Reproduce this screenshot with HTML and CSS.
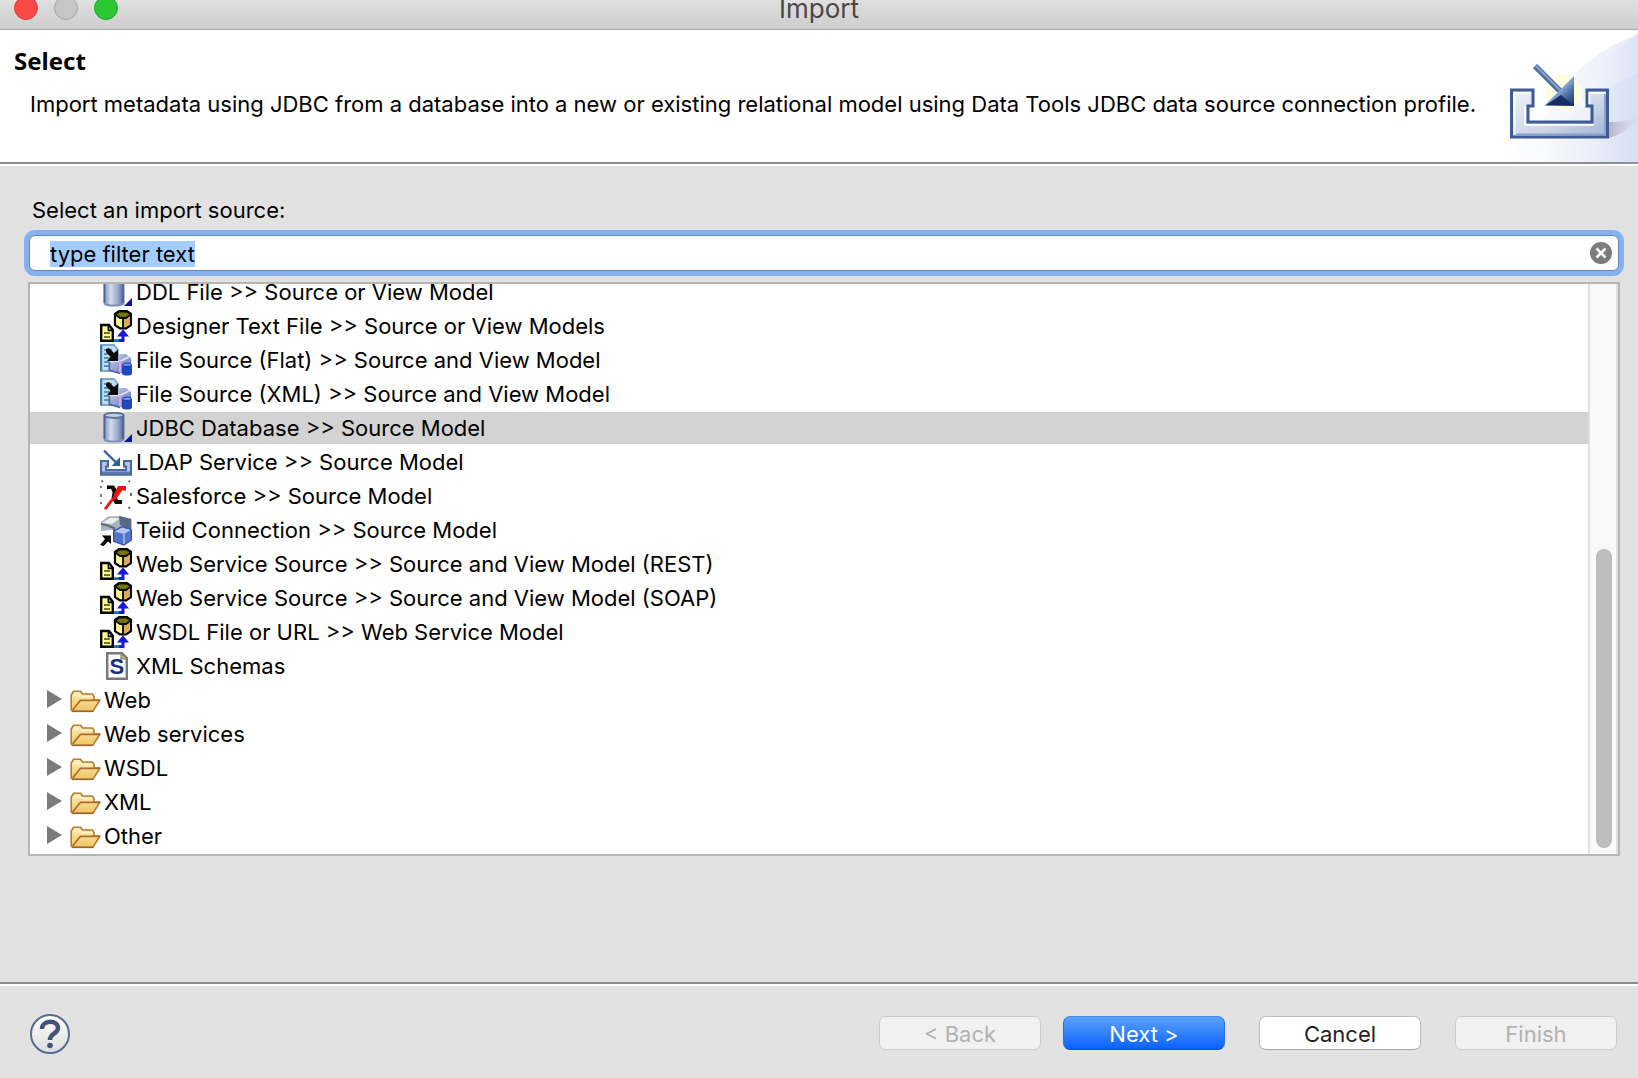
FILE: index.html
```html
<!DOCTYPE html>
<html lang="en">
<head>
<meta charset="utf-8">
<title>Import</title>
<link rel="stylesheet" href="styles.css">
</head>
<body>
<svg class="sprite" aria-hidden="true">
  <defs>
    <linearGradient id="cyl" x1="0" x2="1" y1="0" y2="0">
      <stop offset="0" stop-color="#8094bd"/><stop offset=".35" stop-color="#d3dcec"/><stop offset=".7" stop-color="#98a8cb"/><stop offset="1" stop-color="#4c6193"/>
    </linearGradient>
    <linearGradient id="gold" x1="0" x2="0" y1="0" y2="1">
      <stop offset="0" stop-color="#fdeebb"/><stop offset="1" stop-color="#f0c464"/>
    </linearGradient>
    <linearGradient id="cube" x1="0" x2="1" y1="0" y2="1">
      <stop offset="0" stop-color="#cfd5ee"/><stop offset="1" stop-color="#5a6cb8"/>
    </linearGradient>
    <symbol id="i-database" viewBox="0 0 16 16">
      <path d="M2 1.7V13.6C3.5 15.2 10.5 15.2 12 13.6V1.7Z" fill="url(#cyl)"/>
      <ellipse cx="7" cy="1.7" rx="4.8" ry="1.3" fill="#c5cde0" stroke="#5f739f" stroke-width=".9"/>
      <path d="M2.200 1.700V13.500M11.700 1.700V13.600" fill="none" stroke="#506596" stroke-width="1"/>
      <path d="M2 13.600C3.500 15.200 10.500 15.200 12 13.600" fill="none" stroke="#8290b5" stroke-width="1"/>
      <path d="M16 11V15H12Z" fill="#0c12a8"/>
    </symbol>
    <symbol id="i-model" viewBox="0 0 16 16">
      <path d="M7.500 2L9.500 .6H13.500L15.500 2V7.500L13 9.200H10L7.500 7.600Z" fill="#ffff90" stroke="#000" stroke-width="1.100"/>
      <path d="M11.700 4.400L15 3V7.200L11.700 8.900Z" fill="#d9aa55"/>
      <path d="M7.500 2.200L9.700 .8H13.300L15.500 2.200L13 4H10Z" fill="#777400" stroke="#0c0c00" stroke-width=".9"/>
      <path d="M11.500 4V9" stroke="#000" stroke-width=".9"/>
      <path d="M.6 7.500H4.500L6.400 10V15.400H.6Z" fill="#ffff95" stroke="#000" stroke-width="1.200"/>
      <path d="M4.200 7.500V10.200H6.500" fill="none" stroke="#000" stroke-width=".8"/>
      <path d="M2 11.500H5M2 13.500H5" stroke="#77752c" stroke-width="1"/>
      <path d="M7 15.300H10.500" stroke="#087aa8" stroke-width="1.400"/>
      <path d="M9.500 15.200H11.500V12" fill="none" stroke="#1418d8" stroke-width="1.500"/>
      <path d="M11.500 9.600L14.500 13.200H8.500Z" fill="#1418d8"/>
    </symbol>
    <symbol id="i-file" viewBox="0 0 16 16">
      <path d="M.5 .5H7L9 3V13.5H.5Z" fill="#c2ddec" stroke="#7fa9c8" stroke-width=".9"/>
      <path d="M.5 .5V13.5" stroke="#3f7ca8" stroke-width="1.2"/>
      <path d="M2 3H6M2 5H5M2 7H5M2 9H4.5M2 11H4.5" stroke="#5b93b8" stroke-width=".9"/>
      <path d="M4.500 9L8 5H13L15.500 7V12L12.500 15L4.500 13.300Z" fill="url(#cube)"/>
      <path d="M5 8.800L10.300 8.500L14.500 6.500" fill="none" stroke="#e4e0f6" stroke-width=".8"/>
      <path d="M10 8.500V14.200" stroke="#d9a6e4" stroke-width="1"/>
      <path d="M4.700 9V13.200L10 14.700" fill="none" stroke="#5066a8" stroke-width=".9"/>
      <path d="M11 10.500V15C12 16 15 16 16 15V10.500Z" fill="#1e48bd"/>
      <ellipse cx="13.500" cy="10.400" rx="2.300" ry=".9" fill="#6d94ee" stroke="#17389e" stroke-width=".5"/>
      <path d="M3 2.500L4.500 2L7 4.500L9 2.800V8.500H3.500L5.300 6.500L3 4Z" fill="#0b0b0b"/>
    </symbol>
    <symbol id="i-tray" viewBox="0 0 16 16">
      <path d="M.5 7.500H4V10.200H3V12H13V10.200H12V7.500H15.500V14.400H.5Z" fill="#b5c4e2" stroke="#4a679e"/>
      <path d="M1 13.500H15" stroke="#5b7ab0" stroke-width="1.500"/>
      <path d="M2 2.300L8 8.200" stroke="#3d5f9e" stroke-width="1.100"/>
      <path d="M10 5.500V10H5.800Z" fill="#27609c"/>
    </symbol>
    <symbol id="i-xlink" viewBox="0 0 16 16">
      <path d="M.7 .8L1.5 .4M14.300 .4L15 1M.4 3V4M.4 7V8.500M.4 11V12M15.500 6.500V8M14.200 13.500L15 14.300" stroke="#66706c" stroke-width="1"/>
      <path d="M3.500 2.800H7L8.500 5L8 8L9 10H11V12H7.500L5.800 9L6.300 6L5.500 4.500H3.500Z" fill="#0b0b0b"/>
      <path d="M1.800 14.500L5 10L6.500 8.500L7.500 6L9 3H13V5.300H11L8.500 9L6.500 10.500L3.300 14.800Z" fill="#f01414"/>
    </symbol>
    <symbol id="i-teiid" viewBox="0 0 16 16">
      <path d="M.5 4L4 1.300L10 1L15.500 2.500V9L9 8.500L5 8L.5 8.500Z" fill="#a9b3bf"/>
      <path d="M1 4.500L5 2L10 2.200L6 5Z" fill="#eceff2"/>
      <path d="M9.500 1L15.700 2.500V8L10 5.500Z" fill="#566a86"/>
      <path d="M.5 5L3 5.500L7 7V9" fill="none" stroke="#5f6c78" stroke-width="1"/>
      <path d="M6.800 8.500L11 6.300L15.700 7.800V13L12 15.500L6.800 13.700Z" fill="#5274cc" stroke="#3150a8" stroke-width=".6"/>
      <path d="M7.300 8.700L12 10L15.400 8L11 6.700Z" fill="#b5c8f2"/>
      <path d="M12 10V15" stroke="#a9c0f4" stroke-width=".7"/>
      <path d="M0 15.500L2.500 12.500L1 10.700H5.500V15L4 13.700L1.800 16Z" fill="#050505"/>
    </symbol>
    <symbol id="i-schema" viewBox="0 0 16 16">
      <path d="M3.600 1.600H11L13.400 4V14.400H3.600Z" fill="#fbfcff" stroke="#777" stroke-width="1.200"/>
      <path d="M10.500 1.500V4.500H13.500Z" fill="#c9ad72" stroke="#86806f" stroke-width=".6"/>
      <text x="8.400" y="12" text-anchor="middle" class="schema-letter">S</text>
    </symbol>
    <symbol id="i-folder" viewBox="0 0 16 16">
      <path d="M.6 13V5.500L1.800 3.600H5.300L6.200 5H11.200L12 6.200V8H15L11.500 13.600H1.200Z" fill="url(#gold)" stroke="#b87b33" stroke-width=".8" stroke-linejoin="round"/>
      <path d="M1.300 13L5.200 8.200H14.800" fill="none" stroke="#aa6d2c" stroke-width=".8"/>
      <path d="M2 5.500H5.600L6.400 6.300H11" fill="none" stroke="#fff4cf" stroke-width=".7"/>
      <path d="M1 13.700H11.600" stroke="#9c6228" stroke-width=".7"/>
    </symbol>
  </defs>
</svg>

<main class="dialog">
  <div class="titlebar">
    <div class="lights">
      <button class="light close" aria-label="Close"></button>
      <button class="light minimize" aria-label="Minimize" disabled></button>
      <button class="light expand" aria-label="Zoom"></button>
    </div>
    <span class="title">Import</span>
  </div>

  <header class="banner">
    <div class="banner-text">
      <h1>Select</h1>
      <p>Import metadata using JDBC from a database into a new or existing relational model using Data Tools JDBC data source connection profile.</p>
    </div>
    <svg class="banner-art" viewBox="0 0 138 132" aria-hidden="true">
      <defs>
        <linearGradient id="sky" x1="0" x2="1" y1="0" y2="0">
          <stop offset="0" stop-color="#fff"/><stop offset="1" stop-color="#d5ddf2"/>
        </linearGradient>
        <linearGradient id="steel" x1="0" x2="1" y1="0" y2="1">
          <stop offset="0" stop-color="#eef1f8"/><stop offset=".6" stop-color="#ccd6e8"/><stop offset="1" stop-color="#9fb0d4"/>
        </linearGradient>
        <linearGradient id="tip" x1="0" x2="1" y1="0" y2="1">
          <stop offset=".4" stop-color="#a9c8e4"/><stop offset=".7" stop-color="#4a6da4"/><stop offset="1" stop-color="#1b2f68"/>
        </linearGradient>
        <linearGradient id="shade" x1="0" x2="1" y1="0" y2="0">
          <stop offset="0" stop-color="#b8b2c6"/><stop offset="1" stop-color="#d5d5ea" stop-opacity=".2"/>
        </linearGradient>
      </defs>
      <path d="M138 4C95 20 60 52 52 80L0 132H138Z" fill="url(#sky)" opacity=".55"/>
      <path d="M138 4C108 22 88 50 76 90V132H138Z" fill="url(#sky)" opacity=".6"/>
      <path d="M138 44C105 55 60 90 30 132H138Z" fill="url(#sky)" opacity=".7"/>
      <path d="M109 92C118 92 130 90 138 87C132 98 122 104 109 108Z" fill="url(#shade)"/>
      <circle cx="64" cy="62" r="18" fill="#fffde0"/>
      <path d="M11.500 60H33V76H28V92H92V76H87V60H107.500V107H11.500Z" fill="url(#steel)" stroke="#3d5c96" stroke-width="3"/>
      <path d="M14.500 104V63H30M89.500 74V63H105M25 77V95H94" fill="none" stroke="#fff" stroke-width="2" opacity=".8"/>
      <path d="M16 104.500H105V64" fill="none" stroke="#8da1cb" stroke-width="2"/>
      <path d="M35 36L60 61" stroke="#4d6ea5" stroke-width="6"/>
      <path d="M36 36L60 60" stroke="#8ba4cb" stroke-width="2"/>
      <path d="M74 46V76H44Z" fill="url(#tip)"/>
      <path d="M46 75L61 65L73 75Z" fill="#192d63"/>
    </svg>
  </header>

  <section class="content">
    <label for="filter">Select an import source:</label>
    <div class="search">
      <input id="filter" type="text" value="type filter text" autocomplete="off" spellcheck="false">
      <button class="clear" aria-label="Clear">
        <svg viewBox="0 0 22 22"><circle cx="11" cy="11" r="11" fill="#7b7b7b"/><path d="M6.500 6.500L15.500 15.500M15.500 6.500L6.500 15.500" stroke="#fff" stroke-width="2.600"/></svg>
      </button>
    </div>
    <div class="tree-frame">
      <ul class="tree">
        <li class="leaf"><svg><use href="#i-database"/></svg>DDL File &gt;&gt; Source or View Model</li>
        <li class="leaf"><svg><use href="#i-model"/></svg>Designer Text File &gt;&gt; Source or View Models</li>
        <li class="leaf"><svg><use href="#i-file"/></svg>File Source (Flat) &gt;&gt; Source and View Model</li>
        <li class="leaf"><svg><use href="#i-file"/></svg>File Source (XML) &gt;&gt; Source and View Model</li>
        <li class="leaf selected"><svg><use href="#i-database"/></svg>JDBC Database &gt;&gt; Source Model</li>
        <li class="leaf"><svg><use href="#i-tray"/></svg>LDAP Service &gt;&gt; Source Model</li>
        <li class="leaf"><svg><use href="#i-xlink"/></svg>Salesforce &gt;&gt; Source Model</li>
        <li class="leaf"><svg><use href="#i-teiid"/></svg>Teiid Connection &gt;&gt; Source Model</li>
        <li class="leaf"><svg><use href="#i-model"/></svg>Web Service Source &gt;&gt; Source and View Model (REST)</li>
        <li class="leaf"><svg><use href="#i-model"/></svg>Web Service Source &gt;&gt; Source and View Model (SOAP)</li>
        <li class="leaf"><svg><use href="#i-model"/></svg>WSDL File or URL &gt;&gt; Web Service Model</li>
        <li class="leaf"><svg><use href="#i-schema"/></svg>XML Schemas</li>
        <li class="branch"><svg><use href="#i-folder"/></svg>Web</li>
        <li class="branch"><svg><use href="#i-folder"/></svg>Web services</li>
        <li class="branch"><svg><use href="#i-folder"/></svg>WSDL</li>
        <li class="branch"><svg><use href="#i-folder"/></svg>XML</li>
        <li class="branch"><svg><use href="#i-folder"/></svg>Other</li>
      </ul>
      <div class="track"><div class="thumb"></div></div>
    </div>
  </section>

  <footer class="actions">
    <button class="help" aria-label="Help">
      <svg viewBox="0 0 40 40">
        <defs><linearGradient id="glass" x1="0" x2="0" y1="0" y2="1"><stop offset="0" stop-color="#fff"/><stop offset="1" stop-color="#dcdcdc"/></linearGradient></defs>
        <circle cx="20" cy="20" r="19" fill="url(#glass)" stroke="#576b8f" stroke-width="2"/>
        <path d="M12 15C12 5.500 28 5.500 28 14C28 20 20 19 20 26" fill="none" stroke="#43547b" stroke-width="4.500"/>
        <circle cx="20" cy="31.500" r="2.800" fill="#43547b"/>
      </svg>
    </button>
    <div class="pager">
      <button class="push" disabled>&lt; Back</button>
      <button class="push primary">Next &gt;</button>
    </div>
    <button class="push">Cancel</button>
    <button class="push" disabled>Finish</button>
  </footer>
</main>
<script src="script.js"></script>
</body>
</html>
```
FILE: styles.css
```css
* {
  box-sizing: border-box;
}

body {
  margin: 0;
  font: 22px/28px Inter, "Liberation Sans", sans-serif;
  color: #000;
  background: #e2e2e2;
}

button {
  padding: 0;
  border: 0;
  background: none;
  font: inherit;
  color: inherit;
}

svg {
  display: block;
  flex: none;
}

.sprite {
  position: absolute;
  width: 0;
  height: 0;
}

.schema-letter {
  font: bold 11px "Liberation Sans", sans-serif;
  fill: #1c2f78;
}

.dialog {
  display: flex;
  flex-direction: column;
  height: 100vh;
  overflow: hidden;
}

/* Title bar */
.titlebar {
  display: grid;
  grid-template-columns: 1fr auto 1fr;
  align-items: end;
  align-content: end;
  flex: none;
  height: 30px;
  padding: 0 14px 6px;
  border-bottom: 1px solid #a4a4a4;
  background: linear-gradient(#e0e0e0, #cdcdcd);
  overflow: hidden;
}

.lights {
  display: flex;
  gap: 16px;
  padding-bottom: 3px;
}

.light {
  width: 24px;
  height: 24px;
  border: 1px solid #e33c3a;
  border-radius: 50%;
  background: #fc4948;
}

.minimize {
  border-color: #a5a5a5;
  background: #c6c6c6;
}

.expand {
  border-color: #1fa627;
  background: #2ac833;
}

.title {
  font-size: 26px;
  color: #484848;
}

/* Banner */
.banner {
  display: flex;
  justify-content: space-between;
  flex: none;
  height: 136px;
  border-bottom: 2px solid #fff;
  box-shadow: inset 0 -2px #8e8e8e;
  background: #fff;
}

.banner-text {
  flex: 1;
  min-width: 0;
  padding: 17px 0 0 14px;
}

.banner h1 {
  margin: 0;
  font: bold 24px/28px "Noto Sans", sans-serif;
}

.banner p {
  margin: 15px 0 0 16px;
  white-space: nowrap;
}

.banner-art {
  width: 138px;
  height: 132px;
}

/* Filter and tree */
.content {
  display: flex;
  flex-direction: column;
  flex: 1;
  min-height: 0;
  padding: 30px 18px 126px 28px;
}

label {
  padding: 0 4px 11px;
}

.search {
  display: flex;
  align-items: center;
  flex: none;
  height: 36px;
  margin: 0 1px 11px;
  padding: 0 6px 0 20px;
  border: 1px solid #5f86bf;
  border-radius: 6px;
  background: #fff;
  box-shadow: 0 0 0 5px #86b1ef;
}

.search input {
  flex: 1;
  min-width: 0;
  height: 30px;
  padding: 2px 0 0;
  border: 0;
  outline: 0;
  background: none;
  font: inherit;
}

.search input::selection {
  background: #a4cdff;
  color: #000;
}

.clear svg {
  width: 22px;
  height: 22px;
}

.tree-frame {
  display: flex;
  flex: 1;
  min-height: 0;
  border: 2px solid #b5b5b5;
  background: #fff;
}

.tree {
  display: flex;
  flex-direction: column;
  justify-content: flex-end;
  flex: 1;
  margin: 0;
  padding: 0 0 1px;
  list-style: none;
  overflow: hidden;
}

.tree li {
  display: flex;
  align-items: center;
  flex: none;
  height: 34px;
  white-space: nowrap;
}

.tree svg {
  width: 32px;
  height: 32px;
}

.leaf {
  gap: 4px;
  padding-left: 70px;
}

.branch {
  gap: 2px;
  padding-left: 17px;
}

.branch::before {
  content: "";
  width: 15px;
  height: 18px;
  margin: 0 6px 2px 0;
  background: #7b7b7b;
  clip-path: polygon(0 0, 100% 50%, 0 100%);
}

.selected {
  background: linear-gradient(#d3d3d3, #d3d3d3) center / 100% 32px no-repeat;
}

.track {
  display: flex;
  flex-direction: column;
  justify-content: flex-end;
  width: 30px;
  padding: 0 4px 6px 6px;
  border: solid #e0e0e0;
  border-width: 0 2px;
  background: #f9f9f9;
}

.thumb {
  width: 16px;
  height: 53%;
  border-radius: 8px;
  background: #bdbdbd;
}

/* Footer */
.actions {
  display: flex;
  align-items: center;
  flex: none;
  gap: 34px;
  height: 96px;
  padding: 6px 21px 2px 30px;
  border-top: 2px solid #8e8e8e;
  box-shadow: inset 0 2px #fff;
}

.help {
  margin: 2px auto 0 0;
}

.help svg {
  width: 40px;
  height: 40px;
}

.pager {
  display: flex;
  gap: 22px;
}

.push {
  width: 162px;
  height: 34px;
  padding-top: 2px;
  border: 1px solid #bdbdbd;
  border-bottom-color: #a6a6a6;
  border-radius: 7px;
  background: #fff;
  color: #222;
}

.push:disabled {
  border-color: #cbcbcb;
  background: #f1f1f1;
  color: #b2b2b2;
}

.primary {
  border-color: #3d8df5 #2470f5 #0b4de6;
  background: linear-gradient(#5ba2fa, #0b61ff);
  color: #fff;
}
```
FILE: script.js
```js
const filter = document.getElementById("filter");
filter.focus();
filter.select();
```
